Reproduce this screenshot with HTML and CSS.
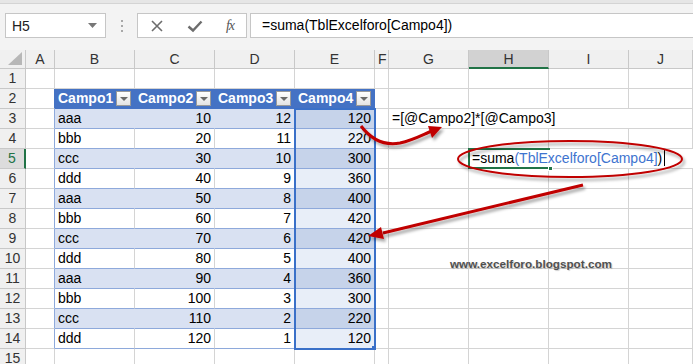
FILE: index.html
```html
<!DOCTYPE html>
<html lang="es">
<head>
    <meta charset="UTF-8">
    <title>TblExcelforo</title>
    <link rel="stylesheet" href="styles.css">
</head>
<body>
<div class="page">
    <div class="ribbon-edge"></div>
    <div class="toolbar">
        <div class="namebox">
            <span>H5</span>
            <svg class="nb-arrow" width="9" height="5" viewBox="0 0 9 5"><path d="M0 0h9L4.5 5z" fill="#777"/></svg>
        </div>
        <div class="grip"><i></i><i></i><i></i></div>
        <div class="fbtns">
            <svg width="14" height="14" viewBox="0 0 14 14"><path d="M2 2L12 12M12 2L2 12" stroke="#6d6d6d" stroke-width="1.6"/></svg>
            <svg width="16" height="14" viewBox="0 0 16 14"><path d="M1.5 7.5L6 11.5L14.5 2.5" fill="none" stroke="#6d6d6d" stroke-width="2.4"/></svg>
            <span class="fx">fx</span>
        </div>
        <div class="formula">=suma(TblExcelforo[Campo4])</div>
    </div>

    <div class="sheet">
        <!-- cabeceras de columna -->
        <div class="c corner"><svg width="16" height="14" viewBox="0 0 16 14"><path d="M15 0V13H1z" fill="#b7b7b7"/></svg></div>
        <div class="c ch">A</div>
        <div class="c ch">B</div>
        <div class="c ch">C</div>
        <div class="c ch">D</div>
        <div class="c ch">E</div>
        <div class="c ch">F</div>
        <div class="c ch">G</div>
        <div class="c ch on">H</div>
        <div class="c ch">I</div>
        <div class="c ch">J</div>

        <!-- fila 1 -->
        <div class="c rh">1</div>
        <div class="c"></div><div class="c"></div><div class="c"></div><div class="c"></div><div class="c"></div>
        <div class="c"></div><div class="c"></div><div class="c"></div><div class="c"></div><div class="c"></div>

        <!-- fila 2: encabezado de la tabla -->
        <div class="c rh">2</div>
        <div class="c edge-h"></div>
        <div class="c th"><span>Campo1</span><b class="dd"></b></div>
        <div class="c th"><span>Campo2</span><b class="dd"></b></div>
        <div class="c th"><span>Campo3</span><b class="dd"></b></div>
        <div class="c th"><span>Campo4</span><b class="dd"></b></div>
        <div class="c"></div><div class="c"></div><div class="c"></div><div class="c"></div><div class="c"></div>

        <div class="c rh">3</div>
        <div class="c edge"></div>
        <div class="c band">aaa</div><div class="c band num">10</div><div class="c band num">12</div><div class="c sel-band num">120</div>
        <div class="c"></div>
        <div class="c span3">=[@Campo2]*[@Campo3]</div>
        <div class="c"></div>

        <div class="c rh">4</div>
        <div class="c edge"></div>
        <div class="c row">bbb</div><div class="c row num">20</div><div class="c row num">11</div><div class="c sel-row num">220</div>
        <div class="c"></div><div class="c"></div><div class="c"></div><div class="c"></div><div class="c"></div>

        <div class="c rh on">5</div>
        <div class="c edge"></div>
        <div class="c band">ccc</div><div class="c band num">30</div><div class="c band num">10</div><div class="c sel-band num">300</div>
        <div class="c"></div><div class="c"></div>
        <div class="c span3 edit">
            <span class="active"><i class="handle"></i></span>=suma<span class="ref">(TblExcelforo[Campo4]</span>)<i class="caret"></i>
        </div>

        <div class="c rh">6</div>
        <div class="c edge"></div>
        <div class="c row">ddd</div><div class="c row num">40</div><div class="c row num">9</div><div class="c sel-row num">360</div>
        <div class="c"></div><div class="c"></div><div class="c"></div><div class="c"></div><div class="c"></div>

        <div class="c rh">7</div>
        <div class="c edge"></div>
        <div class="c band">aaa</div><div class="c band num">50</div><div class="c band num">8</div><div class="c sel-band num">400</div>
        <div class="c"></div><div class="c"></div><div class="c"></div><div class="c"></div><div class="c"></div>

        <div class="c rh">8</div>
        <div class="c edge"></div>
        <div class="c row">bbb</div><div class="c row num">60</div><div class="c row num">7</div><div class="c sel-row num">420</div>
        <div class="c"></div><div class="c"></div><div class="c"></div><div class="c"></div><div class="c"></div>

        <div class="c rh">9</div>
        <div class="c edge"></div>
        <div class="c band">ccc</div><div class="c band num">70</div><div class="c band num">6</div><div class="c sel-band num">420</div>
        <div class="c"></div><div class="c"></div><div class="c"></div><div class="c"></div><div class="c"></div>

        <div class="c rh">10</div>
        <div class="c edge"></div>
        <div class="c row">ddd</div><div class="c row num">80</div><div class="c row num">5</div><div class="c sel-row num">400</div>
        <div class="c"></div><div class="c"></div><div class="c"></div><div class="c"></div><div class="c"></div>

        <div class="c rh">11</div>
        <div class="c edge"></div>
        <div class="c band">aaa</div><div class="c band num">90</div><div class="c band num">4</div><div class="c sel-band num">360</div>
        <div class="c"></div><div class="c"></div><div class="c"></div><div class="c"></div><div class="c"></div>

        <div class="c rh">12</div>
        <div class="c edge"></div>
        <div class="c row">bbb</div><div class="c row num">100</div><div class="c row num">3</div><div class="c sel-row num">300</div>
        <div class="c"></div><div class="c"></div><div class="c"></div><div class="c"></div><div class="c"></div>

        <div class="c rh">13</div>
        <div class="c edge"></div>
        <div class="c band">ccc</div><div class="c band num">110</div><div class="c band num">2</div><div class="c sel-band num">220</div>
        <div class="c"></div><div class="c"></div><div class="c"></div><div class="c"></div><div class="c"></div>

        <div class="c rh">14</div>
        <div class="c edge"></div>
        <div class="c row">ddd</div><div class="c row num">120</div><div class="c row num">1</div><div class="c sel-row num">120</div>
        <div class="c"></div><div class="c"></div><div class="c"></div><div class="c"></div><div class="c"></div>

        <div class="c rh">15</div>
        <div class="c"></div><div class="c"></div><div class="c"></div><div class="c"></div><div class="c"></div>
        <div class="c"></div><div class="c"></div><div class="c"></div><div class="c"></div><div class="c"></div>

        <!-- rango seleccionado E3:E14 -->
        <div class="selection"><i></i></div>
        <div class="blog">www.excelforo.blogspot.com</div>
    </div>

    <!-- flechas y elipse dibujadas encima -->
    <svg class="marks" width="693" height="364" viewBox="0 0 693 364">
        <defs>
            <filter id="sh" x="-20%" y="-40%" width="140%" height="180%">
                <feDropShadow dx="2" dy="3" stdDeviation="1.8" flood-color="#000" flood-opacity="0.35"/>
            </filter>
        </defs>
        <g filter="url(#sh)" fill="none" stroke="#c00000">
            <path d="M361 126C370 138 383 146 400 143C414 140 424 134 432 131" stroke-width="3"/>
            <ellipse cx="570" cy="159" rx="112" ry="18" stroke-width="2"/>
            <path d="M583 185L383 233" stroke-width="3"/>
        </g>
        <g filter="url(#sh)" fill="#c00000">
            <path d="M442 127L428 126L432 138z"/>
            <path d="M368 236L381 227L384 239z"/>
        </g>
    </svg>
</div>
</body>
</html>
```

FILE: styles.css
```css
* {
    margin: 0;
    padding: 0;
    box-sizing: border-box;
}
body {
    font-family: "Liberation Sans", Arial, sans-serif;
    font-size: 14px;
    color: #000;
    background: #fff;
}
.page {
    position: relative;
    width: 693px;
    height: 364px;
    overflow: hidden;
}
.ribbon-edge {
    height: 4px;
    background: #e6e6e6;
    border-bottom: 1px solid #d4d4d4;
}
.toolbar {
    height: 46px;
    background: #f3f3f3;
    display: flex;
    align-items: flex-start;
    padding: 9px 0 0 5px;
}
.namebox {
    width: 101px;
    height: 25px;
    background: #fff;
    border: 1px solid #c6c6c6;
    display: flex;
    align-items: center;
    justify-content: space-between;
    padding: 0 8px 0 6px;
    color: #222;
}
.grip {
    width: 31px;
    height: 25px;
    display: flex;
    flex-direction: column;
    align-items: center;
    justify-content: center;
    gap: 3px;
}
.grip i {
    width: 2px;
    height: 2px;
    background: #a8a8a8;
}
.fbtns {
    width: 110px;
    height: 25px;
    background: #fff;
    border: 1px solid #c6c6c6;
    display: flex;
    align-items: center;
    justify-content: space-between;
    padding: 0 12px 0 12px;
}
.fx {
    font-family: "Liberation Serif", serif;
    font-style: italic;
    font-size: 14px;
    color: #555;
    letter-spacing: -1px;
}
.formula {
    flex: 1;
    height: 25px;
    margin-left: 3px;
    background: #fff;
    border: 1px solid #c6c6c6;
    border-right: none;
    padding: 0 0 0 11px;
    line-height: 23px;
}
.sheet {
    position: relative;
    display: grid;
    grid-template-columns: 26px 29px 80px 80px 80px 80px 14px 80px 80px 80px 64px;
    grid-template-rows: 19px repeat(15, 20px);
}
.c {
    border-right: 1px solid #d4d4d4;
    border-bottom: 1px solid #d4d4d4;
    padding: 0 3px;
    line-height: 19px;
    white-space: nowrap;
    overflow: hidden;
}
.corner {
    background: #f0f0f0;
    border-color: #c8c8c8;
    display: flex;
    align-items: flex-end;
    justify-content: flex-end;
    padding: 0 2px 2px 0;
}
.ch {
    background: #f0f0f0;
    border-color: #c8c8c8;
    text-align: center;
    color: #333;
    line-height: 18px;
}
.ch.on {
    background: #d2d2d2;
    border-bottom: 2px solid #217346;
}
.rh {
    background: #f0f0f0;
    border-color: #c8c8c8;
    text-align: center;
    color: #333;
}
.rh.on {
    background: #dcdcdc;
    color: #217346;
    border-right: 2px solid #217346;
}
.edge {
    border-right-color: #8ea9db;
}
.edge-h {
    border-right-color: #4472c4;
}
.th {
    background: #4472c4;
    border-right-color: #4472c4;
    border-bottom-color: #4472c4;
    color: #fff;
    font-weight: bold;
    font-size: 14px;
    display: flex;
    align-items: center;
    justify-content: space-between;
    padding: 0 3px 0 3px;
}
.dd {
    width: 15px;
    height: 15px;
    background: linear-gradient(#ffffff, #e4e4e4);
    border: 1px solid #9a9a9a;
    position: relative;
}
.dd::after {
    content: "";
    position: absolute;
    left: 3px;
    top: 5px;
    border-left: 4px solid transparent;
    border-right: 4px solid transparent;
    border-top: 4px solid #6a6a6a;
}
.band {
    background: #d9e1f2;
    border-right-color: #d9e1f2;
    border-bottom-color: #8ea9db;
}
.row {
    background: #fff;
    border-bottom-color: #8ea9db;
}
.sel-band {
    background: #c6d3ea;
    border-right-color: #c6d3ea;
    border-bottom-color: #8ea9db;
}
.sel-row {
    background: #e8eef8;
    border-right-color: #e8eef8;
    border-bottom-color: #8ea9db;
}
.num {
    text-align: right;
}
.span3 {
    grid-column: span 3;
    border-right: none;
    overflow: visible;
}
.edit {
    position: relative;
    background: #fff;
}
.active {
    position: absolute;
    left: -1px;
    top: -1px;
    width: 82px;
    height: 21px;
    border: 2px solid #217346;
    border-right: none;
}
.handle {
    position: absolute;
    right: -3px;
    bottom: -4px;
    width: 5px;
    height: 5px;
    background: #217346;
    border: 1px solid #fff;
}
.ref {
    color: #3e74cf;
}
.caret {
    display: inline-block;
    width: 1px;
    height: 16px;
    background: #000;
    vertical-align: -3px;
    margin-left: 2px;
}
.selection {
    position: absolute;
    left: 294px;
    top: 58px;
    width: 82px;
    height: 242px;
    border: 2px solid #3a70c8;
}
.selection i {
    position: absolute;
    right: -2px;
    bottom: -2px;
    width: 4px;
    height: 4px;
    background: #3a70c8;
}
.blog {
    position: absolute;
    left: 450px;
    top: 207px;
    font-size: 11.7px;
    font-weight: bold;
    color: #505050;
    line-height: 14px;
    text-shadow: 1px 1px 1px rgba(0, 0, 0, 0.2);
}
.marks {
    position: absolute;
    left: 0;
    top: 0;
    pointer-events: none;
}
```
